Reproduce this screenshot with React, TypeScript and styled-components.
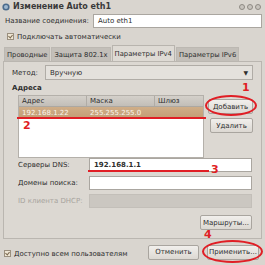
import React from 'react'
import styled, { createGlobalStyle } from 'styled-components'

const Global = createGlobalStyle`
  html, body { margin: 0; padding: 0; }
  body {
    font-family: "DejaVu Sans", "Noto Sans", sans-serif;
    font-size: 7px;
    color: #2e2e2e;
    background: #d9d5cf;
  }
  * { box-sizing: border-box; }
`

const Window = styled.div`
  position: relative;
  width: 265px;
  height: 265px;
  background: #d9d5cf;
  overflow: hidden;
`

const TitleBar = styled.div`
  height: 13px;
  display: flex;
  align-items: center;
  padding: 0 4px 0 2px;
  gap: 3px;
  font-weight: bold;
  font-size: 8px;
  color: #3a3a3a;
`

const TitleText = styled.span`
  flex: 1;
`

const WinButtons = styled.div`
  display: flex;
  gap: 2px;
`

const WinButton = styled.span`
  width: 6px;
  height: 6px;
  border-radius: 50%;
  border: 1px solid #8e8a84;
  background: #c8c4be;
`

const Body = styled.div`
  padding: 1px 3px 0 3px;
`

const NameRow = styled.div`
  display: flex;
  align-items: center;
  height: 14px;
  padding-left: 2px;
`

const NameLabel = styled.span`
  width: 88px;
`

const Input = styled.div<{ $disabled?: boolean; $bold?: boolean }>`
  flex: 1;
  height: 14px;
  background: ${p => (p.$disabled ? '#cbc7c1' : '#ffffff')};
  border: 1px solid ${p => (p.$disabled ? '#c3bfb9' : '#aaa6a0')};
  display: flex;
  align-items: center;
  padding-left: 4px;
  font-weight: ${p => (p.$bold ? 'bold' : 'normal')};
`

const CheckRow = styled.div`
  display: flex;
  align-items: center;
  gap: 3px;
  height: 13px;
  padding-left: 4px;
  margin-top: 2px;
`

const Check = styled.span`
  width: 7px;
  height: 7px;
  border: 1px solid #9a8f7e;
  background: #efe6d4;
  position: relative;
  &::after {
    content: '';
    position: absolute;
    left: 1px;
    top: 0px;
    width: 2px;
    height: 3px;
    border-right: 1px solid #7a6a50;
    border-bottom: 1px solid #7a6a50;
    transform: rotate(40deg);
  }
`

const Tabs = styled.div`
  display: flex;
  align-items: flex-end;
  gap: 1px;
  height: 16px;
  margin-top: 2px;
  padding-left: 1px;
  font-size: 6.8px;
`

const Tab = styled.div<{ $active?: boolean }>`
  height: ${p => (p.$active ? '16px' : '14px')};
  display: flex;
  align-items: center;
  padding: 0 2px;
  background: ${p => (p.$active ? '#dedad4' : '#c3bfb9')};
  border: 1px solid ${p => (p.$active ? '#b8b4ae' : '#bcb8b2')};
  border-bottom: none;
`

const Panel = styled.div`
  height: 178px;
  border: 1px solid #bab6b0;
  background: #dcd8d2;
  padding: 3px 8px 0 8px;
`

const MethodRow = styled.div`
  display: flex;
  align-items: center;
  height: 15px;
`

const MethodLabel = styled.span`
  width: 33px;
`

const Combo = styled.div`
  flex: 1;
  height: 15px;
  background: #e4e1dc;
  border: 1px solid #b0aca6;
  display: flex;
  align-items: center;
  justify-content: space-between;
  padding: 0 4px;
  font-size: 6px;
  span:first-child { font-size: 7px; }
`

const SectionTitle = styled.div`
  font-weight: bold;
  margin-top: 4px;
  height: 10px;
`

const AddrArea = styled.div`
  display: flex;
  gap: 3px;
  margin-top: 1px;
  padding-left: 6px;
`

const Table = styled.div`
  width: 188px;
  height: 63px;
  background: #ffffff;
  border: 1px solid #b4b0aa;
`

const HeaderRow = styled.div`
  display: grid;
  grid-template-columns: 68px 68px 1fr;
  height: 11px;
  background: linear-gradient(#d4d0ca, #c2beb8);
  border-bottom: 1px solid #aca8a2;
`

const HeadCell = styled.div`
  display: flex;
  align-items: center;
  padding-left: 3px;
  border-right: 1px solid #b0aca6;
  &:last-child { border-right: none; }
`

const DataRow = styled.div`
  display: grid;
  grid-template-columns: 68px 68px 1fr;
  height: 12px;
  background: linear-gradient(#cfae88, #c29c73);
  color: #fbf6ee;
`

const DataCell = styled.div`
  display: flex;
  align-items: center;
  padding-left: 3px;
`

const SideButtons = styled.div`
  display: flex;
  flex-direction: column;
  align-items: flex-end;
  gap: 4px;
  padding-top: 4px;
  width: 46px;
`

const Button = styled.div<{ $w: number }>`
  width: ${p => p.$w}px;
  height: 15px;
  display: flex;
  align-items: center;
  justify-content: center;
  background: linear-gradient(#f1efec, #dcd8d2);
  border: 1px solid #a9a59f;
  border-radius: 2px;
  color: #2e2e2e;
`

const Form = styled.div`
  display: grid;
  grid-template-columns: 71px 1fr;
  row-gap: 4px;
  padding-left: 6px;
  margin-right: 1px;
`

const FormLabel = styled.span<{ $muted?: boolean }>`
  display: flex;
  align-items: center;
  height: 14px;
  color: ${p => (p.$muted ? '#a7a39d' : '#2e2e2e')};
`

const RoutesRow = styled.div`
  display: flex;
  justify-content: flex-end;
  margin-top: 7px;
  margin-right: 1px;
`

const Footer = styled.div`
  display: flex;
  align-items: center;
  height: 20px;
  margin-top: 3px;
`

const FooterCheck = styled(CheckRow)`
  flex: 1;
  margin-top: 3px;
  padding-left: 1px;
`

const FooterButtons = styled.div`
  display: flex;
  gap: 8px;
  margin-right: 3px;
`

const Ring = styled.div<{ $x: number; $y: number; $w: number; $h: number }>`
  position: absolute;
  left: ${p => p.$x}px;
  top: ${p => p.$y}px;
  width: ${p => p.$w}px;
  height: ${p => p.$h}px;
  border: 2px solid #e01e25;
  border-radius: 50%;
`

const Mark = styled.div<{ $x: number; $y: number; $w: number }>`
  position: absolute;
  left: ${p => p.$x}px;
  top: ${p => p.$y}px;
  width: ${p => p.$w}px;
  height: 2px;
  background: #e01e25;
`

const Num = styled.div<{ $x: number; $y: number }>`
  position: absolute;
  left: ${p => p.$x}px;
  top: ${p => p.$y}px;
  color: #e01e25;
  font-weight: bold;
  font-size: 11px;
  line-height: 11px;
`

const AppIcon = () => (
  <svg width="8" height="8" viewBox="0 0 8 8">
    <circle cx="4" cy="4" r="3.6" fill="#4b6b8c" />
    <circle cx="4" cy="4" r="2" fill="#9fb8cf" />
  </svg>
)

export default function App() {
  return (
    <Window>
      <Global />
      <TitleBar>
        <AppIcon />
        <TitleText>Изменение Auto eth1</TitleText>
        <WinButtons>
          <WinButton />
          <WinButton />
          <WinButton />
        </WinButtons>
      </TitleBar>
      <Body>
        <NameRow>
          <NameLabel>Название соединения:</NameLabel>
          <Input>Auto eth1</Input>
        </NameRow>
        <CheckRow>
          <Check />
          Подключать автоматически
        </CheckRow>
        <Tabs>
          <Tab>Проводные</Tab>
          <Tab>Защита 802.1x</Tab>
          <Tab $active>Параметры IPv4</Tab>
          <Tab>Параметры IPv6</Tab>
        </Tabs>
        <Panel>
          <MethodRow>
            <MethodLabel>Метод:</MethodLabel>
            <Combo>
              <span>Вручную</span>
              <span>▼</span>
            </Combo>
          </MethodRow>
          <SectionTitle>Адреса</SectionTitle>
          <AddrArea>
            <Table>
              <HeaderRow>
                <HeadCell>Адрес</HeadCell>
                <HeadCell>Маска</HeadCell>
                <HeadCell>Шлюз</HeadCell>
              </HeaderRow>
              <DataRow>
                <DataCell>192.168.1.22</DataCell>
                <DataCell>255.255.255.0</DataCell>
                <DataCell />
              </DataRow>
            </Table>
            <SideButtons>
              <Button $w={45}>Добавить</Button>
              <Button $w={43}>Удалить</Button>
            </SideButtons>
          </AddrArea>
          <Form>
            <FormLabel>Серверы DNS:</FormLabel>
            <Input $bold>192.168.1.1</Input>
            <FormLabel>Домены поиска:</FormLabel>
            <Input />
            <FormLabel $muted>ID клиента DHCP:</FormLabel>
            <Input $disabled />
          </Form>
          <RoutesRow>
            <Button $w={52}>Маршруты...</Button>
          </RoutesRow>
        </Panel>
        <Footer>
          <FooterCheck>
            <Check />
            Доступно всем пользователям
          </FooterCheck>
          <FooterButtons>
            <Button $w={51}>Отменить</Button>
            <Button $w={52}>Применить...</Button>
          </FooterButtons>
        </Footer>
      </Body>

      <Num $x={242} $y={82}>1</Num>
      <Ring $x={205} $y={95} $w={52} $h={21} />
      <Mark $x={17} $y={117} $w={189} />
      <Num $x={23} $y={120}>2</Num>
      <Mark $x={88} $y={170} $w={121} />
      <Num $x={211} $y={164}>3</Num>
      <Num $x={204} $y={229}>4</Num>
      <Ring $x={202} $y={240} $w={61} $h={23} />
    </Window>
  )
}
